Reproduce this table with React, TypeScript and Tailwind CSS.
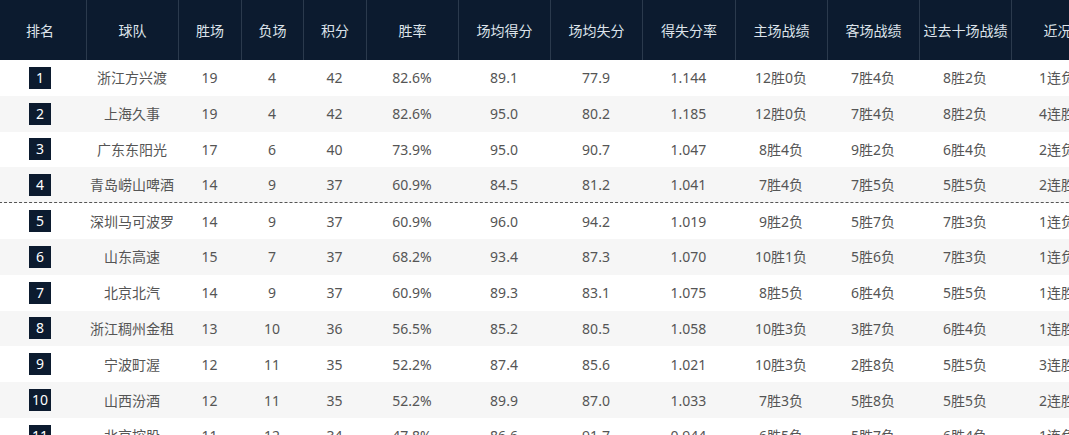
import React from "react";

const headers = ["排名", "球队", "胜场", "负场", "积分", "胜率", "场均得分", "场均失分", "得失分率", "主场战绩", "客场战绩", "过去十场战绩", "近况"];
const widths = ["w-[92px]", "w-[92px]", "w-[63px]", "w-[62px]", "w-[63px]", "w-[92px]", "w-[92px]", "w-[92px]", "w-[93px]", "w-[92px]", "w-[92px]", "w-[92px]", "w-[92px]"];

const rows: string[][] = [
  ["1", "浙江方兴渡", "19", "4", "42", "82.6%", "89.1", "77.9", "1.144", "12胜0负", "7胜4负", "8胜2负", "1连负"],
  ["2", "上海久事", "19", "4", "42", "82.6%", "95.0", "80.2", "1.185", "12胜0负", "7胜4负", "8胜2负", "4连胜"],
  ["3", "广东东阳光", "17", "6", "40", "73.9%", "95.0", "90.7", "1.047", "8胜4负", "9胜2负", "6胜4负", "2连负"],
  ["4", "青岛崂山啤酒", "14", "9", "37", "60.9%", "84.5", "81.2", "1.041", "7胜4负", "7胜5负", "5胜5负", "2连胜"],
  ["5", "深圳马可波罗", "14", "9", "37", "60.9%", "96.0", "94.2", "1.019", "9胜2负", "5胜7负", "7胜3负", "1连负"],
  ["6", "山东高速", "15", "7", "37", "68.2%", "93.4", "87.3", "1.070", "10胜1负", "5胜6负", "7胜3负", "1连负"],
  ["7", "北京北汽", "14", "9", "37", "60.9%", "89.3", "83.1", "1.075", "8胜5负", "6胜4负", "5胜5负", "1连胜"],
  ["8", "浙江稠州金租", "13", "10", "36", "56.5%", "85.2", "80.5", "1.058", "10胜3负", "3胜7负", "6胜4负", "1连胜"],
  ["9", "宁波町渥", "12", "11", "35", "52.2%", "87.4", "85.6", "1.021", "10胜3负", "2胜8负", "5胜5负", "3连胜"],
  ["10", "山西汾酒", "12", "11", "35", "52.2%", "89.9", "87.0", "1.033", "7胜3负", "5胜8负", "5胜5负", "2连胜"],
  ["11", "北京控股", "11", "12", "34", "47.8%", "86.6", "91.7", "0.944", "6胜5负", "5胜7负", "6胜4负", "1连负"],
];

export default function App() {
  return (
    <div
      className="w-[1069px] h-[435px] overflow-hidden bg-white"
      style={{ fontFamily: '"Noto Sans", "Noto Sans CJK SC", sans-serif' }}
    >
      <div className="ml-[-6px] w-[1200px]">
        <div className="flex h-[60px] bg-[#0c1b2f]">
          {headers.map((h, i) => (
            <div
              key={i}
              className={`${widths[i]} shrink-0 flex items-center justify-center text-[14px] text-[#dde3ea] ${i > 0 ? "border-l border-[#2b3a4d]" : ""}`}
            >
              {h}
            </div>
          ))}
        </div>
        {rows.map((r, ri) => (
          <div
            key={ri}
            className={`flex h-[35.8px] ${ri % 2 === 1 ? "bg-[#f6f6f6]" : "bg-white"} ${ri === 3 ? "border-b border-dashed border-[#555]" : ""}`}
          >
            {r.map((c, ci) => (
              <div
                key={ci}
                className={`${widths[ci]} shrink-0 flex items-center justify-center text-[14px] text-[#555] whitespace-nowrap`}
              >
                {ci === 0 ? (
                  <span className="w-[22px] h-[22px] bg-[#0c1b2f] text-white flex items-center justify-center text-[14px] leading-none">
                    {c}
                  </span>
                ) : (
                  c
                )}
              </div>
            ))}
          </div>
        ))}
      </div>
    </div>
  );
}
